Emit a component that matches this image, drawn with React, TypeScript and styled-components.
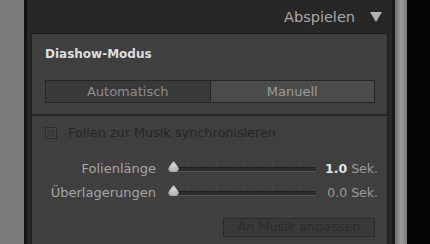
import React from 'react';
import styled, { createGlobalStyle } from 'styled-components';

const GlobalStyle = createGlobalStyle`
  html, body {
    margin: 0;
    padding: 0;
    background: #000;
    overflow: hidden;
  }
  body {
    font-family: 'DejaVu Sans', 'Liberation Sans', sans-serif;
  }
`;

const Screen = styled.div`
  display: flex;
  width: 430px;
  height: 244px;
  overflow: hidden;
`;

const LeftStrip = styled.div`
  width: 24px;
  flex: none;
  background: #7c7c7c;
`;

const Panel = styled.div`
  width: 361px;
  flex: none;
  background: #272727;
  border-left: 3px solid #121212;
  border-right: 3px solid #1a1a1a;
  display: flex;
  flex-direction: column;
  padding-left: 4px;
  box-sizing: content-box;
`;

const Scroll = styled.div`
  width: 12px;
  flex: none;
  background: linear-gradient(90deg, #6d6d6d 0%, #9a9a9a 50%, #7a7a7a 100%);
`;

const Black = styled.div`
  flex: 1;
  background: #040404;
`;

const Header = styled.div`
  height: 33px;
  display: flex;
  align-items: center;
  justify-content: flex-end;
  gap: 15px;
  padding-right: 10px;
  box-sizing: border-box;
  color: #a9a9a9;
  font-size: 14.5px;
  padding-top: 1px;
`;

const Triangle = styled.span`
  width: 0;
  height: 0;
  border-left: 6px solid transparent;
  border-right: 6px solid transparent;
  border-top: 10px solid #b3b3b3;
`;

const Box = styled.div`
  width: 355px;
  flex: 1;
  background: #3f3f3f;
  border: 1px solid #1d1d1d;
  border-bottom: none;
  display: flex;
  flex-direction: column;
`;

const Section = styled.div<{ $last?: boolean }>`
  padding: 0 12px 0 13px;
  border-bottom: ${(p) => (p.$last ? 'none' : '2px solid #262626')};
  display: flex;
  flex-direction: column;
`;

const SectionTitle = styled.div`
  color: #dedede;
  font-size: 12px;
  font-weight: 600;
  height: 27px;
  display: flex;
  align-items: flex-end;
  margin-bottom: 19px;
`;

const Segmented = styled.div`
  display: flex;
  height: 21px;
  border: 1px solid #262626;
  margin-bottom: 11px;
`;

const Segment = styled.div<{ $active?: boolean }>`
  flex: 1;
  display: flex;
  align-items: center;
  justify-content: center;
  background: ${(p) => (p.$active ? '#4b4b4b' : '#3a3a3a')};
  color: ${(p) => (p.$active ? '#9c9c9c' : '#8d8d8d')};
  font-size: 13px;
  & + & {
    border-left: 1px solid #262626;
  }
`;

const CheckRow = styled.label`
  display: flex;
  align-items: center;
  gap: 11px;
  margin-top: 9px;
  color: #262626;
  font-size: 12.8px;
`;

const CheckBox = styled.span`
  width: 10px;
  height: 10px;
  border: 1px solid #2e2e2e;
  background: #3c3c3c;
  box-shadow: inset 0 0 0 1px #444;
`;

const Sliders = styled.div`
  display: flex;
  flex-direction: column;
  gap: 6px;
  margin-top: 19px;
`;

const SliderRow = styled.div`
  display: grid;
  grid-template-columns: 123px 148px 1fr;
  align-items: center;
  height: 18px;
`;

const SliderLabel = styled.span`
  text-align: right;
  color: #a6a6a6;
  font-size: 13px;
  padding-right: 12px;
`;

const Track = styled.div`
  position: relative;
  height: 18px;
`;

const Ticks = styled.div`
  position: absolute;
  left: 6px;
  right: 4px;
  top: 3px;
  height: 4px;
  background: repeating-linear-gradient(90deg, #494949 0 1px, transparent 1px 14px);
`;

const Rail = styled.div`
  position: absolute;
  left: 0;
  right: 0;
  top: 8px;
  height: 3px;
  background: #2c2c2c;
  border-top: 1px solid #222;
  border-bottom: 1px solid #565656;
  border-radius: 2px;
`;

const Thumb = styled.div`
  position: absolute;
  left: 0;
  top: 2px;
  width: 11px;
  height: 11px;
  background: radial-gradient(circle at 50% 40%, #d8d8d8, #9e9e9e);
  clip-path: polygon(50% 0, 85% 45%, 100% 70%, 90% 100%, 10% 100%, 0 70%, 15% 45%);
  border-radius: 0 0 4px 4px;
`;

const Value = styled.span<{ $bright?: boolean }>`
  text-align: right;
  font-size: 12.5px;
  color: #9a9a9a;
  margin-right: -3px;
  b {
    color: ${(p) => (p.$bright ? '#e4e4e4' : '#9a9a9a')};
    font-weight: ${(p) => (p.$bright ? 700 : 400)};
  }
`;

const ButtonRow = styled.div`
  display: flex;
  justify-content: flex-end;
  margin-top: 17px;
`;

const FitButton = styled.button`
  width: 152px;
  height: 19px;
  background: #393939;
  border: 1px solid #2a2a2a;
  color: #2c2c2c;
  font-family: inherit;
  font-size: 12.8px;
  padding: 0;
  box-sizing: border-box;
  line-height: 1;
`;

const Slider: React.FC<{ label: string; value: string; bright?: boolean }> = ({ label, value, bright }) => (
  <SliderRow>
    <SliderLabel>{label}</SliderLabel>
    <Track>
      <Ticks />
      <Rail />
      <Thumb />
    </Track>
    <Value $bright={bright}>
      <b>{value}</b> Sek.
    </Value>
  </SliderRow>
);

const App: React.FC = () => (
  <>
    <GlobalStyle />
    <Screen>
      <LeftStrip />
      <Panel>
        <Header>
          <span>Abspielen</span>
          <Triangle />
        </Header>
        <Box>
          <Section>
            <SectionTitle>Diashow-Modus</SectionTitle>
            <Segmented>
              <Segment>Automatisch</Segment>
              <Segment $active>Manuell</Segment>
            </Segmented>
          </Section>
          <Section $last>
            <CheckRow>
              <CheckBox />
              Folien zur Musik synchronisieren
            </CheckRow>
            <Sliders>
              <Slider label="Folienlänge" value="1.0" bright />
              <Slider label="Überlagerungen" value="0.0" />
            </Sliders>
            <ButtonRow>
              <FitButton>An Musik anpassen</FitButton>
            </ButtonRow>
          </Section>
        </Box>
      </Panel>
      <Scroll />
      <Black />
    </Screen>
  </>
);

export default App;
